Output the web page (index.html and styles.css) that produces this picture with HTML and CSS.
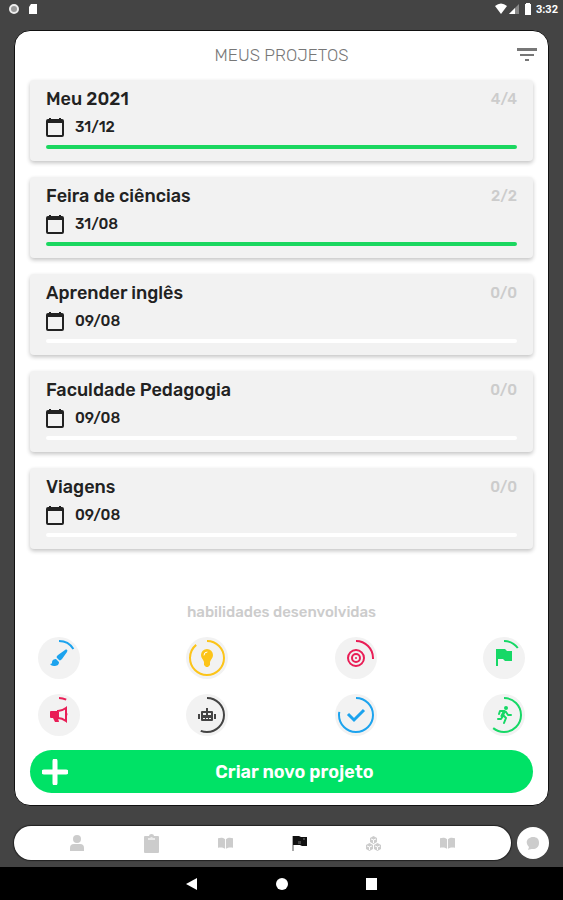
FILE: index.html
```html
<!DOCTYPE html>
<html lang="pt-BR">
<head>
  <meta charset="UTF-8">
  <meta name="viewport" content="width=device-width, initial-scale=1">
  <title>Meus Projetos</title>
  <link rel="stylesheet" href="styles.css">
</head>
<body>
  <svg class="sprite" aria-hidden="true">
    <symbol id="calendar" viewBox="0 0 18 20">
      <path d="M2 3h14a1 1 0 0 1 1 1v14a1 1 0 0 1-1 1H2a1 1 0 0 1-1-1V4a1 1 0 0 1 1-1z" fill="none" stroke="currentColor" stroke-width="2"/>
      <path d="M1 3h16v3H1zM3 1h2v2H3zM13 1h2v2h-2z"/>
    </symbol>
    <symbol id="book" viewBox="0 0 16 12">
      <path d="M0 1c3-1 5-1 7.500 1v10C5 10.500 3 10.500 0 11zM16 1c-3-1-5-1-7.500 1v10c2.500-1.500 4.500-1.500 7.500-1z"/>
    </symbol>
  </svg>

  <header class="status-bar">
    <div class="status-group">
      <svg width="12" height="12" viewBox="0 0 12 12"><circle cx="6" cy="6" r="4" fill="#999" stroke="#eee" stroke-width="2"/></svg>
      <svg width="10" height="12" viewBox="0 0 10 12"><path d="M3 1h6v10H1V4z" fill="#fff"/></svg>
    </div>
    <div class="status-group status-right">
      <svg width="14" height="12" viewBox="0 0 14 12"><path d="M1 3q6-5 12 0L7 11z" fill="#fff"/></svg>
      <svg width="12" height="12" viewBox="0 0 12 12"><path d="M11 1v10H1z" fill="#888"/><path d="M7 5v6H1z" fill="#fff"/></svg>
      <svg class="battery" width="8" height="12" viewBox="0 0 8 12"><path d="M2 0h4v1h1v11H1V1h1z" fill="#fff"/></svg>
      <span>3:32</span>
    </div>
  </header>

  <main class="panel">
    <div class="panel-header">
      <h1>MEUS PROJETOS</h1>
      <button class="filter" aria-label="Filtrar">
        <svg width="20" height="14" viewBox="0 0 20 14"><path d="M0 0h20v3H0zM3 6h14v2H3zM8 11h4v2H8z" fill="#777"/></svg>
      </button>
    </div>

    <section class="projects">
      <article class="card">
        <div class="card-top"><h2>Meu 2021</h2><span class="count">4/4</span></div>
        <div class="date"><svg><use href="#calendar"/></svg>31/12</div>
        <progress value="4" max="4" aria-label="Meu 2021"></progress>
      </article>
      <article class="card">
        <div class="card-top"><h2>Feira de ciências</h2><span class="count">2/2</span></div>
        <div class="date"><svg><use href="#calendar"/></svg>31/08</div>
        <progress value="2" max="2" aria-label="Feira de ciências"></progress>
      </article>
      <article class="card">
        <div class="card-top"><h2>Aprender inglês</h2><span class="count">0/0</span></div>
        <div class="date"><svg><use href="#calendar"/></svg>09/08</div>
        <progress value="0" max="1" aria-label="Aprender inglês"></progress>
      </article>
      <article class="card">
        <div class="card-top"><h2>Faculdade Pedagogia</h2><span class="count">0/0</span></div>
        <div class="date"><svg><use href="#calendar"/></svg>09/08</div>
        <progress value="0" max="1" aria-label="Faculdade Pedagogia"></progress>
      </article>
      <article class="card">
        <div class="card-top"><h2>Viagens</h2><span class="count">0/0</span></div>
        <div class="date"><svg><use href="#calendar"/></svg>09/08</div>
        <progress value="0" max="1" aria-label="Viagens"></progress>
      </article>
    </section>

    <section class="skills">
      <h3>habilidades desenvolvidas</h3>
      <div class="skill-row">
        <svg class="skill blue" viewBox="0 0 42 42">
          <circle class="ring" cx="21" cy="21" r="17" pathLength="100" stroke-dasharray="16 100"/>
          <path d="M27 13c2-1 3 0 2 2l-5 7c-1 1-2 2-3 1l-2-2c-1-1 0-2 1-3zM18 22l3 3c0 3-2 4-5 4-2 0-3-1-4-2 2 0 2-1 2-2 0-2 2-3 4-3z"/>
        </svg>
        <svg class="skill yellow" viewBox="0 0 42 42">
          <circle class="ring" cx="21" cy="21" r="17" pathLength="100" stroke-dasharray="89 100"/>
          <path d="M21 12a6 6 0 0 1 6 6c0 3-2 4-3 7h-6c-1-3-3-4-3-7a6 6 0 0 1 6-6zM18 25h6v3l-2 2h-2l-2-2z"/>
          <path d="M18 18a3 3 0 0 1 3-3" fill="none" stroke="#fff" stroke-linecap="round"/>
        </svg>
        <svg class="skill red" viewBox="0 0 42 42">
          <circle class="ring" cx="21" cy="21" r="17" pathLength="100" stroke-dasharray="26 100"/>
          <g fill="none" stroke="currentColor" stroke-width="2"><circle cx="21" cy="21" r="8"/><circle cx="21" cy="21" r="4"/></g>
          <circle cx="21" cy="21" r="1"/>
        </svg>
        <svg class="skill green" viewBox="0 0 42 42">
          <circle class="ring" cx="21" cy="21" r="17" pathLength="100" stroke-dasharray="15 100"/>
          <path d="M13 12h9l2 2h5v10h-7l-2-2h-5v7h-2z"/>
        </svg>
      </div>
      <div class="skill-row">
        <svg class="skill red" viewBox="0 0 42 42">
          <circle class="ring" cx="21" cy="21" r="17" pathLength="100" stroke-dasharray="7 100"/>
          <path d="M13 17h7v7l1 4h-4l-2-4h-2q-1 0-1-1v-5q0-1 1-1z"/>
          <path d="M20 17q4 0 8-3v13q-4-3-8-3z" fill="none" stroke="currentColor" stroke-width="2"/>
          <path d="M28 18q3 2 0 5z"/>
        </svg>
        <svg class="skill dark" viewBox="0 0 42 42">
          <circle class="ring" cx="21" cy="21" r="17" pathLength="100" stroke-dasharray="56 100"/>
          <path d="M20 14h2v3h4q1 0 1 1v8q0 1-1 1H16q-1 0-1-1v-8q0-1 1-1h4zM12 20h2v5h-2zM28 20h2v5h-2z"/>
          <path d="M17 19h3v2h-3zM22 19h3v2h-3zM17 24h2v1h-2zM20 24h2v1h-2zM23 24h2v1h-2z" fill="#f2f2f2"/>
        </svg>
        <svg class="skill blue" viewBox="0 0 42 42">
          <circle class="ring" cx="21" cy="21" r="17" pathLength="100" stroke-dasharray="78 100"/>
          <path d="M13 20l6 6 10-10" fill="none" stroke="currentColor" stroke-width="3"/>
        </svg>
        <svg class="skill green" viewBox="0 0 42 42">
          <circle class="ring" cx="21" cy="21" r="17" pathLength="100" stroke-dasharray="61 100"/>
          <g fill="none" stroke="currentColor" stroke-width="2" stroke-linecap="round" stroke-linejoin="round">
            <path d="M16 20l1-3h4l2 1 2 3h3M15 25h3l2-3M20 21l3 3-2 5"/><path d="M21 18l-2 4" stroke-width="3"/>
          </g>
          <circle cx="23" cy="14" r="2"/>
        </svg>
      </div>
    </section>

    <button class="create">
      <svg width="26" height="26" viewBox="0 0 26 26"><path d="M13 2v22M2 13h22" stroke="#fff" stroke-width="5" stroke-linecap="round"/></svg>
      <span>Criar novo projeto</span>
    </button>
  </main>

  <div class="bottom">
    <nav class="tabs">
      <a href="#" aria-label="Perfil"><svg width="14" height="16" viewBox="0 0 14 16"><circle cx="7" cy="4" r="4"/><path d="M0 16v-3q0-4 4-4h6q4 0 4 4v3z"/></svg></a>
      <a href="#" aria-label="Tarefas"><svg width="15" height="19" viewBox="0 0 15 19"><path d="M1 2h4q0-2 2.500-2T10 2h4q1 0 1 1v15q0 1-1 1H1q-1 0-1-1V3q0-1 1-1z"/><path d="M4 6V4h2q1.500-2 3 0h2v2z" fill="#fff" opacity=".6"/></svg></a>
      <a href="#" aria-label="Diário"><svg width="15" height="12"><use href="#book"/></svg></a>
      <a href="#" class="active" aria-label="Projetos"><svg width="15" height="16" viewBox="0 0 15 16"><path d="M1 1v15" stroke="#aaa" stroke-width="2"/><path d="M1 1h6l2 1h6v9h-5l-2-1H1z"/><path d="M6 6h3v3H6zM11 3h2v2h-2z" fill="#444"/></svg></a>
      <a href="#" aria-label="Blocos"><svg width="15" height="15" viewBox="0 0 15 15"><path d="M4 2l3.500-2L11 2v4l-3.500 2L4 6zM0 9l3.500-2L7 9v4l-3.500 2L0 13zM8 9l3.500-2L15 9v4l-3.500 2L8 13z"/><path d="M5 3l2.500 1L10 3M1 10l2.500 1L6 10M9 10l2.500 1 2.500-1M3.500 11v3M11.500 11v3M7.500 4v3" fill="none" stroke="#fff"/></svg></a>
      <a href="#" aria-label="Leituras"><svg width="15" height="12"><use href="#book"/></svg></a>
    </nav>
    <button class="chat" aria-label="Conversa">
      <svg width="14" height="14" viewBox="0 0 14 14"><path d="M7 1c4 0 6 2 6 6s-3 6-6 6c-2 0-3 0-5 1l1-3c-5-5-1-10 4-10z" fill="#ccc"/></svg>
    </button>
  </div>

  <footer class="system-nav">
    <button aria-label="Voltar"><svg viewBox="0 0 12 12"><path d="M11 0v12L0 6z"/></svg></button>
    <button aria-label="Início"><svg viewBox="0 0 12 12"><circle cx="6" cy="6" r="6"/></svg></button>
    <button aria-label="Recentes"><svg viewBox="0 0 12 12"><path d="M0 0h11v12H0z"/></svg></button>
  </footer>
</body>
</html>
```
FILE: styles.css
```css
:root {
  --green: #00e266;
  --blue: #1ca3ee;
  --red: #e91e56;
  --yellow: #fcc419;
}

* {
  box-sizing: border-box;
}

body {
  margin: 0;
  min-height: 100vh;
  display: flex;
  flex-direction: column;
  background: #444;
  color: #222;
  font-family: Rubik, Inter, Roboto, sans-serif;
}

h1, h2, h3 {
  margin: 0;
}

button {
  padding: 0;
  border: none;
  background: none;
  font-family: inherit;
  cursor: pointer;
}

svg {
  display: block;
  fill: currentColor;
}

.sprite {
  position: absolute;
  width: 0;
  height: 0;
}

.status-bar {
  height: 30px;
  padding: 3px 5px 0 8px;
  display: flex;
  justify-content: space-between;
}

.status-group {
  height: 12px;
  display: flex;
  align-items: center;
  gap: 8px;
}

.status-right {
  gap: 0;
  color: #fff;
  font: 700 11px Roboto, sans-serif;
}

.battery {
  margin: 0 4px;
}

.panel {
  flex: 1;
  margin: 0 14px;
  padding: 0 15px 12px;
  display: flex;
  flex-direction: column;
  background: #fff;
  border: 1px solid #111;
  border-radius: 16px;
}

.panel-header {
  height: 48px;
  margin: 0 -4px 1px;
  display: grid;
  grid-template-columns: 20px 1fr 20px;
  align-items: center;
}

.panel-header h1 {
  grid-column: 2;
  text-align: center;
  font-size: 17px;
  font-weight: 300;
  color: #777;
}

.projects {
  display: grid;
  gap: 16px;
}

.card {
  height: 81px;
  padding: 8px 16px;
  background: #f2f2f2;
  border-radius: 4px;
  box-shadow: 0 2px 4px rgba(0, 0, 0, 0.24);
}

.card-top {
  display: flex;
  justify-content: space-between;
  align-items: center;
  line-height: 22px;
}

.card h2 {
  font-size: 18px;
  font-weight: 500;
}

.count {
  color: #ccc;
  font-size: 15px;
  font-weight: 500;
}

.date {
  height: 20px;
  margin: 7px 0 8px;
  display: flex;
  align-items: center;
  gap: 11px;
  font-size: 15px;
  font-weight: 500;
}

.date svg {
  width: 18px;
  height: 20px;
}

progress {
  display: block;
  width: 100%;
  height: 4px;
  appearance: none;
  border: none;
}

progress::-webkit-progress-bar {
  background: #fff;
  border-radius: 2px;
}

progress::-webkit-progress-value {
  background: #1bd760;
  border-radius: 2px;
}

.skills {
  margin-top: auto;
  padding: 0 8px;
  display: grid;
  gap: 15px;
}

.skills h3 {
  color: #ccc;
  text-align: center;
  font-size: 15px;
  line-height: 20px;
  font-weight: 500;
}

.skill-row {
  display: flex;
  justify-content: space-between;
}

.skill {
  width: 42px;
  height: 42px;
  background: #f2f2f2;
  border-radius: 50%;
}

.ring {
  fill: none;
  stroke: currentColor;
  stroke-width: 2;
  transform: rotate(-90deg);
  transform-origin: center;
}

.blue { color: var(--blue); }
.yellow { color: var(--yellow); }
.red { color: var(--red); }
.green { color: #16d866; }
.dark { color: #444; }

.create {
  height: 43px;
  margin-top: 14px;
  padding: 0 12px;
  display: grid;
  grid-template-columns: 26px 1fr;
  align-items: center;
  background: var(--green);
  border-radius: 22px;
  color: #fff;
  font-size: 18px;
  font-weight: 600;
}

.bottom {
  height: 61px;
  padding: 13px 14px 0;
  display: flex;
  align-items: center;
  gap: 6px;
}

.tabs {
  flex: 1;
  height: 34px;
  padding: 0 26px;
  display: flex;
  align-items: center;
  background: #fff;
  border-radius: 17px;
  box-shadow: 0 0 1px 1px #222;
}

.tabs a {
  flex: 1;
  display: flex;
  justify-content: center;
  color: #ccc;
}

.tabs .active {
  color: #111;
}

.chat {
  width: 32px;
  height: 32px;
  display: grid;
  place-items: center;
  background: #fff;
  border-radius: 50%;
}

.system-nav {
  height: 33px;
  display: flex;
  justify-content: center;
  align-items: center;
  gap: 78px;
  background: #000;
}

.system-nav svg {
  width: 12px;
  height: 12px;
  fill: #fff;
}
```
